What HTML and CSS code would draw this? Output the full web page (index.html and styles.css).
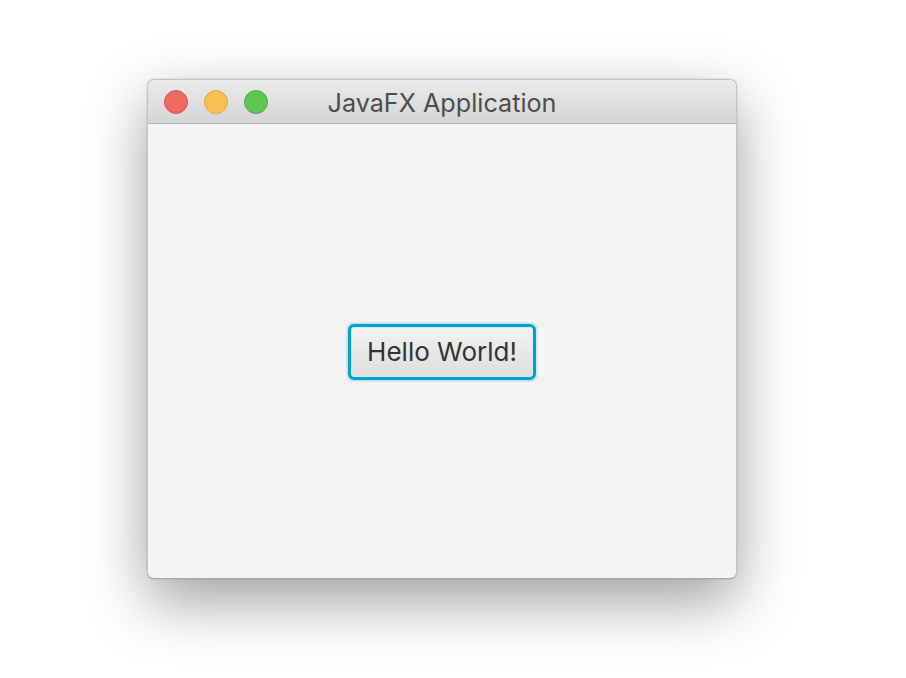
FILE: index.html
```html
<!DOCTYPE html>
<html>
<head>
<meta charset="utf-8">
<link rel="stylesheet" href="styles.css">
</head>
<body>
<div class="window">
  <div class="titlebar">
    <div class="lights">
      <span class="light red"></span>
      <span class="light yellow"></span>
      <span class="light green"></span>
    </div>
    <div class="title">JavaFX Application</div>
  </div>
  <div class="content">
    <button class="btn">Hello World!</button>
  </div>
</div>
</body>
</html>
```
FILE: styles.css
```css
html, body {
  margin: 0;
  padding: 0;
  background: #ffffff;
  width: 906px;
  height: 678px;
  overflow: hidden;
}
body {
  padding-top: 79px;
  padding-left: 147px;
  box-sizing: border-box;
  font-family: Inter, "Liberation Sans", Arial, sans-serif;
}
.window {
  width: 590px;
  height: 500px;
  border-radius: 7px;
  border: 1px solid #c4c4c4;
  border-bottom-color: #a8a8a8;
  box-sizing: border-box;
  background: #f4f4f4;
  display: flex;
  flex-direction: column;
  box-shadow: 0 22px 60px rgba(0,0,0,0.38), 0 0 2px rgba(0,0,0,0.2);
  overflow: hidden;
}
.titlebar {
  height: 44px;
  flex: none;
  box-sizing: border-box;
  background: linear-gradient(#ebebeb, #d5d5d5);
  border-bottom: 1px solid #b4b4b4;
  display: flex;
  align-items: center;
  position: relative;
}
.lights {
  display: flex;
  gap: 16px;
  padding-left: 16px;
}
.light {
  width: 24px;
  height: 24px;
  border-radius: 50%;
  box-sizing: border-box;
}
.red { background: #ee6a5f; border: 1px solid #d9574c; }
.yellow { background: #f6bf4f; border: 1px solid #dea73a; }
.green { background: #5fc655; border: 1px solid #4aae40; }
.title {
  position: absolute;
  left: 0;
  right: 0;
  top: 0;
  bottom: 0;
  display: flex;
  align-items: center;
  justify-content: center;
  font-size: 25.2px;
  color: #4d4d4d;
  padding-top: 2px;
}
.content {
  flex: 1;
  display: flex;
  align-items: center;
  justify-content: center;
}
.btn {
  width: 188px;
  height: 56px;
  box-sizing: border-box;
  border: 3px solid #039ed3;
  border-radius: 6px;
  background: linear-gradient(#f2f2f2, #dedede);
  box-shadow: 0 0 0 2px rgba(3,158,211,0.18), inset 0 0 0 1px #d6ecf5;
  font-family: Inter, "Liberation Sans", Arial, sans-serif;
  font-size: 26px;
  color: #333333;
  padding: 0;
  margin-top: 1px;
}
```
